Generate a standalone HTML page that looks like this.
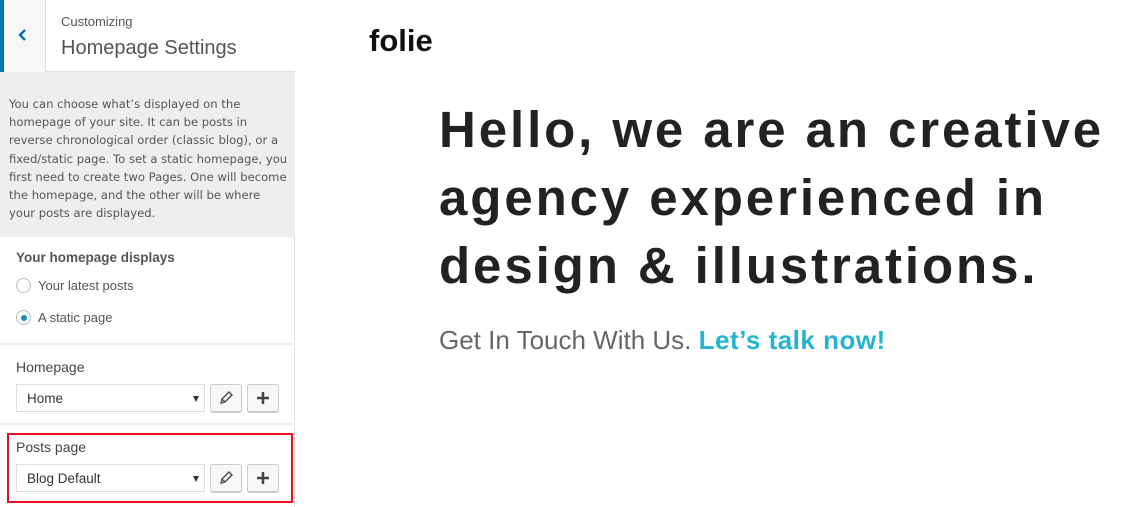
<!DOCTYPE html>
<html><head><style>
*{margin:0;padding:0;box-sizing:border-box}
body{width:1132px;height:507px;overflow:hidden;background:#fff;font-family:"Liberation Sans",sans-serif;position:relative}
.sb{position:absolute;left:0;top:0;width:295px;height:507px;background:#fff;border-right:1px solid #ddd}
.hdr{position:absolute;left:0;top:0;width:295px;height:72px;border-bottom:1px solid #ddd;background:#fff}
.back{position:absolute;left:0;top:0;width:46px;height:72px;background:#f7f7f7;border-left:4px solid #0073aa;border-right:1px solid #ddd}
.back svg{position:absolute;left:11px;top:27px}
.c1{position:absolute;left:61px;top:14px;font-size:13px;color:#555}
.c2{position:absolute;left:61px;top:37px;font-size:20px;color:#555;font-weight:300}
.desc{position:absolute;left:0;top:72px;width:295px;height:165px;background:#eee;padding:23px 6px 0 9px;font-family:"DejaVu Sans",sans-serif;font-size:11.6px;line-height:18.2px;color:#555}
.lbl{position:absolute;left:16px;font-size:13.5px;font-weight:bold;color:#555}
.rad{position:absolute;left:16px;width:15px;height:15px;border:1px solid #b4b9be;border-radius:50%;background:#fff}
.rad.on::after{content:"";position:absolute;left:4px;top:4px;width:6px;height:6px;border-radius:50%;background:#1e8cbe}
.rt{position:absolute;left:38px;font-size:13px;color:#555}
.sep{position:absolute;left:0;width:295px;height:2px;background:#eee}
.sel{position:absolute;left:16px;width:189px;height:28px;border:1px solid #ddd;background:#fff;font-size:13.5px;color:#333;padding:6px 0 0 10px}
.sel::after{content:"";position:absolute;right:5px;top:11px;border-left:3px solid transparent;border-right:3px solid transparent;border-top:6px solid #333}
.btn{position:absolute;width:32px;height:28px;border:1px solid #ccc;border-radius:3px;background:#f7f7f7;box-shadow:0 1px 0 #ccc}
.red{position:absolute;left:7px;top:433px;width:286px;height:70px;border:2px solid #e3161f}
.logo{position:absolute;left:369px;top:23px;font-size:31px;font-weight:bold;color:#111;letter-spacing:0px}
.h1{position:absolute;left:439px;top:96px;font-size:51px;line-height:68px;font-weight:bold;color:#222;letter-spacing:2.9px;white-space:nowrap}
.sub{position:absolute;left:439px;top:325px;font-size:26px;color:#666;white-space:nowrap}
.sub b{color:#25b4cf;letter-spacing:.5px}
</style></head><body>
<div class="sb">
<div class="hdr">
<div class="back"><svg width="16" height="16" viewBox="0 0 16 16"><path d="M10 3 L5 8 L10 13" fill="none" stroke="#0073aa" stroke-width="2.4"/></svg></div>
<div class="c1">Customizing</div>
<div class="c2">Homepage Settings</div>
</div>
<div class="desc">You can choose what’s displayed on the homepage of your site. It can be posts in reverse chronological order (classic blog), or a fixed/static page. To set a static homepage, you first need to create two Pages. One will become the homepage, and the other will be where your posts are displayed.</div>
<div class="lbl" style="top:250px">Your homepage displays</div>
<div class="rad" style="top:278px"></div><div class="rt" style="top:278px">Your latest posts</div>
<div class="rad on" style="top:310px"></div><div class="rt" style="top:310px">A static page</div>
<div class="sep" style="top:343px"></div>
<div class="lbl" style="top:359px;font-weight:normal;font-size:14px;color:#444">Homepage</div>
<div class="sel" style="top:384px">Home</div>
<div class="btn" style="left:210px;top:384px"><svg width="30" height="26"><path d="M10 18 L11 14 L18 7 L21 10 L14 17 Z M11 14 L14 17" fill="none" stroke="#555" stroke-width="1.5"/></svg></div>
<div class="btn" style="left:247px;top:384px"><svg width="30" height="26"><path d="M15 7 V19 M9 13 H21" stroke="#444" stroke-width="2.5"/></svg></div>
<div class="sep" style="top:423px"></div>
<div class="lbl" style="top:439px;font-weight:normal;font-size:14px;color:#444">Posts page</div>
<div class="sel" style="top:464px">Blog Default</div>
<div class="btn" style="left:210px;top:464px"><svg width="30" height="26"><path d="M10 18 L11 14 L18 7 L21 10 L14 17 Z M11 14 L14 17" fill="none" stroke="#555" stroke-width="1.5"/></svg></div>
<div class="btn" style="left:247px;top:464px"><svg width="30" height="26"><path d="M15 7 V19 M9 13 H21" stroke="#444" stroke-width="2.5"/></svg></div>
<div class="red"></div>
</div>
<div class="logo">folie</div>
<div class="h1">Hello, we are an creative<br>agency experienced in<br>design &amp; illustrations.</div>
<div class="sub">Get In Touch With Us. <b>Let’s talk now!</b></div>
</body></html>
